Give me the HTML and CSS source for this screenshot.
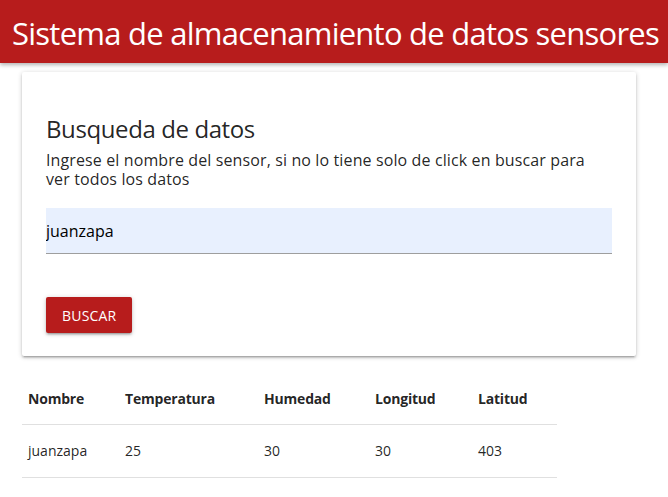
FILE: index.html
```html
<!DOCTYPE html>
<html lang="es">
<head>
<meta charset="utf-8">
<title>Sistema de almacenamiento de datos sensores</title>
<link rel="stylesheet" href="styles.css">
</head>
<body>
<header class="topbar">
  <h1 class="topbar-title">Sistema de almacenamiento de datos sensores</h1>
</header>
<main class="content">
  <section class="card">
    <h2 class="card-title">Busqueda de datos</h2>
    <p class="card-text">Ingrese el nombre del sensor, si no lo tiene solo de click en buscar para ver todos los datos</p>
    <div class="field">
      <input class="field-input" type="text" value="juanzapa">
    </div>
    <button class="btn" type="button">BUSCAR</button>
  </section>
  <table class="data-table">
    <thead>
      <tr>
        <th class="col-nombre">Nombre</th>
        <th class="col-temp">Temperatura</th>
        <th class="col-hum">Humedad</th>
        <th class="col-lon">Longitud</th>
        <th class="col-lat">Latitud</th>
      </tr>
    </thead>
    <tbody>
      <tr>
        <td>juanzapa</td>
        <td>25</td>
        <td>30</td>
        <td>30</td>
        <td>403</td>
      </tr>
    </tbody>
  </table>
</main>
</body>
</html>
```
FILE: styles.css
```css
* { box-sizing: border-box; }
html, body { margin: 0; padding: 0; background: #fff; }
body {
  font-family: "Open Sans", "Noto Sans", sans-serif;
  color: rgba(0,0,0,0.87);
}
.topbar {
  background: #b71c1c;
  height: 63px;
  box-shadow: 0 2px 4px rgba(0,0,0,0.3);
  display: flex;
  align-items: center;
  padding: 2px 0 0 12px;
  position: relative;
  z-index: 1;
}
.topbar-title {
  margin: 0;
  color: #fff;
  font-weight: 400;
  font-size: 31px;
  letter-spacing: -0.75px;
  white-space: nowrap;
}
.content {
  padding: 9px 32px 0 22px;
}
.card {
  background: #fff;
  box-shadow: 0 2px 2px 0 rgba(0,0,0,0.14), 0 3px 1px -2px rgba(0,0,0,0.12), 0 1px 5px 0 rgba(0,0,0,0.2);
  border-radius: 2px;
  padding: 41px 24px 23px 24px;
  height: 284px;
}
.card-title {
  margin: 0;
  font-size: 24px;
  font-weight: 400;
  line-height: 32px;
  letter-spacing: -0.4px;
}
.card-text {
  margin: 6px 0 0;
  font-size: 16px;
  line-height: 19px;
  letter-spacing: 0.12px;
}
.field { margin-top: 19px; }
.field-input {
  display: block;
  width: 100%;
  height: 46px;
  border: none;
  border-bottom: 1px solid #9e9e9e;
  background: #e8f0fe;
  font: inherit;
  font-size: 16px;
  color: #000;
  padding: 0;
  outline: none;
}
.btn {
  margin-top: 43px;
  background: #b71c1c;
  color: #fff;
  border: none;
  border-radius: 2px;
  height: 36px;
  padding: 0 16px;
  font-family: inherit;
  font-size: 14px;
  letter-spacing: 0.2px;
  box-shadow: 0 2px 2px 0 rgba(0,0,0,0.14), 0 3px 1px -2px rgba(0,0,0,0.12), 0 1px 5px 0 rgba(0,0,0,0.2);
}
.data-table {
  margin-top: 18px;
  border-collapse: collapse;
  width: 535px;
  font-size: 14px;
}
.data-table th, .data-table td {
  text-align: left;
  padding: 0 6px;
}
.data-table th { height: 50px; font-weight: 700; letter-spacing: -0.2px; }
.data-table td { height: 53px; }
.data-table tr { border-bottom: 1px solid #e0e0e0; }
.col-nombre { width: 97px; }
.col-temp { width: 139px; }
.col-hum { width: 111px; }
.col-lon { width: 103px; }
.col-lat { width: 85px; }
```
